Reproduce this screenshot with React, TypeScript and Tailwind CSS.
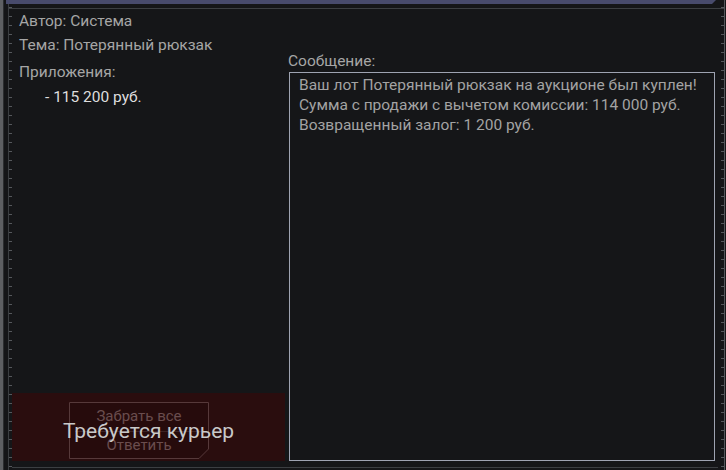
import React from 'react'

// Mail message view: author/subject/attachments on the left, message body on the right
const ticks = 'bg-[repeating-linear-gradient(to_bottom,transparent_0px,transparent_7px,#55585c_7px,#55585c_8px,transparent_8px,transparent_9px)]'

const ChamferButton: React.FC = () => (
  <div className="relative w-[140px] h-[57px] flex flex-col items-center justify-between py-[5px]">
    <svg className="absolute inset-0" width="140" height="57" viewBox="0 0 140 57">
      <path d="M0.5 0.5 H139.5 V47 L130 56.5 H0.5 Z" fill="#260b0c" stroke="#56393a" strokeWidth="1" />
      <line x1="6" y1="29.5" x2="134" y2="29.5" stroke="#3d2324" strokeWidth="1" />
    </svg>
    <span className="relative text-[15px] leading-[18px] text-[#6a4d4e]">Забрать все</span>
    <span className="relative text-[15px] leading-[18px] text-[#6a4d4e]">Ответить</span>
  </div>
)

export default function App() {
  return (
    <div className="w-[726px] h-[470px] bg-[#151618] flex overflow-hidden font-['Roboto','Liberation_Sans',sans-serif]">
      {/* left frame */}
      <div className="w-[12px] h-full flex">
        <div className="w-[3px] h-full bg-[#5e6063]" />
        <div className="w-[1px] h-full bg-[#2c2e30]" />
        <div className="w-[4px] h-full" />
        <div className="w-[1px] h-full bg-[#3c3f42]" />
        <div className={`w-[3px] h-full ${ticks}`} />
      </div>

      <div className="flex-1 flex flex-col">
        <div className="h-[4px] mr-[2px] -ml-[6px] bg-[#484b6c] [clip-path:polygon(0_0,100%_0,calc(100%-4px)_100%,0_100%)]" />
        <div className="h-[4px]" />
        <div className="h-[1px] -ml-[4px] mr-[-6px] bg-[#3c3f42]" />

        <div className="flex-1 flex">
          {/* left column */}
          <div className="w-[273px] flex flex-col text-[15.5px] text-[#a6a6a6]">
            <div className="pl-[7px] h-[24px] leading-[24px]">Автор: Система</div>
            <div className="pl-[7px] h-[25px] leading-[25px]">Тема: Потерянный рюкзак</div>
            <div className="pl-[7px] h-[27px] leading-[27px] mt-[1px]">Приложения:</div>
            <div className="pl-[33px] h-[22px] leading-[22px] text-[#dedede]">- 115 200 руб.</div>
            <div className="flex-1" />
            <div className="relative h-[68px] bg-[#2a0d0e] flex items-start pt-[9px] pl-[57px]">
              <ChamferButton />
              <span className="absolute left-0 right-0 top-[24px] text-center text-[21px] leading-[28px] text-[#c9c9c9]">
                Требуется курьер
              </span>
            </div>
          </div>

          {/* right column */}
          <div className="w-[427px] ml-[3px] flex flex-col">
            <div className="h-[63px] pt-[42px] text-[15.5px] leading-[20px] text-[#a6a6a6]">Сообщение:</div>
            <div className="w-[426px] h-[389px] ml-[1px] border border-[#9ea3b1] pt-[2px] pl-[9px] text-[15.5px] leading-[20px] text-[#a3a3a3]">
              <p>Ваш лот Потерянный рюкзак на аукционе был куплен!</p>
              <p>Сумма с продажи с вычетом комиссии: 114 000 руб.</p>
              <p>Возвращенный залог: 1 200 руб.</p>
            </div>
          </div>
        </div>

        <div className="h-[6px]" />
        <div className="h-[1px] mb-[2px] bg-[#3c3f42]" />
      </div>

      {/* right frame */}
      <div className="w-[8px] h-full flex pl-[3px]">
        <div className={`w-[3px] h-full ${ticks}`} />
        <div className="w-[1px] h-full bg-[#55585c]" />
      </div>
    </div>
  )
}
